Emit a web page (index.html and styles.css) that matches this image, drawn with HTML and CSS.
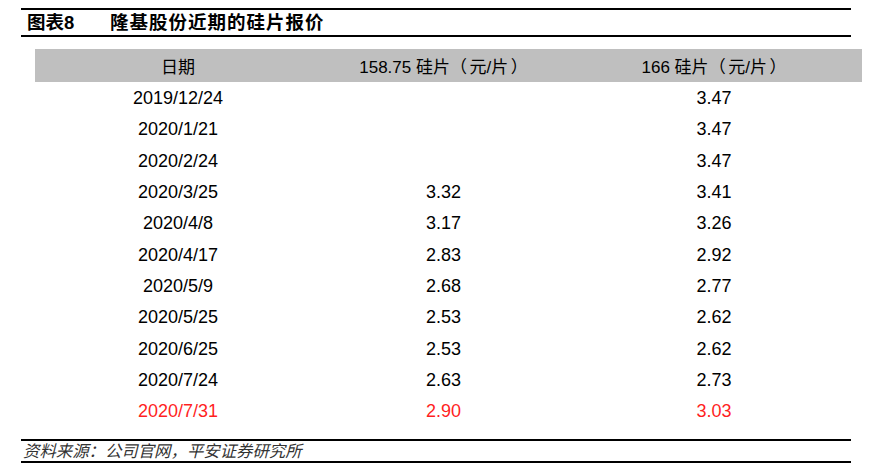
FILE: index.html
```html
<!DOCTYPE html>
<html lang="zh-CN">
<head>
<meta charset="utf-8">
<title>隆基股份近期的硅片报价</title>
<link rel="stylesheet" href="styles.css">
</head>
<body>
<div class="page">
  <div class="title">
    <span class="title-no">图表8</span>
    <span class="title-text">隆基股份近期的硅片报价</span>
  </div>
  <div class="table">
    <div class="row head">
      <div class="cell">日期</div>
      <div class="cell">158.75 硅片<span class="po">（</span>元/片<span class="pc">）</span></div>
      <div class="cell">166 硅片<span class="po">（</span>元/片<span class="pc">）</span></div>
    </div>
    <div class="row"><div class="cell">2019/12/24</div><div class="cell"></div><div class="cell">3.47</div></div>
    <div class="row"><div class="cell">2020/1/21</div><div class="cell"></div><div class="cell">3.47</div></div>
    <div class="row"><div class="cell">2020/2/24</div><div class="cell"></div><div class="cell">3.47</div></div>
    <div class="row"><div class="cell">2020/3/25</div><div class="cell">3.32</div><div class="cell">3.41</div></div>
    <div class="row"><div class="cell">2020/4/8</div><div class="cell">3.17</div><div class="cell">3.26</div></div>
    <div class="row"><div class="cell">2020/4/17</div><div class="cell">2.83</div><div class="cell">2.92</div></div>
    <div class="row"><div class="cell">2020/5/9</div><div class="cell">2.68</div><div class="cell">2.77</div></div>
    <div class="row"><div class="cell">2020/5/25</div><div class="cell">2.53</div><div class="cell">2.62</div></div>
    <div class="row"><div class="cell">2020/6/25</div><div class="cell">2.53</div><div class="cell">2.62</div></div>
    <div class="row"><div class="cell">2020/7/24</div><div class="cell">2.63</div><div class="cell">2.73</div></div>
    <div class="row red"><div class="cell">2020/7/31</div><div class="cell">2.90</div><div class="cell">3.03</div></div>
  </div>
  <div class="source">资料来源：公司官网，平安证券研究所</div>
</div>
</body>
</html>
```
FILE: styles.css
```css
html, body {
  margin: 0;
  padding: 0;
  background: #ffffff;
}
body {
  font-family: "Liberation Sans", "Noto Sans CJK SC", sans-serif;
  color: #000000;
}
.page {
  padding: 8px 0 0 21px;
  width: 830px;
}
.title {
  border-top: 2px solid #000;
  border-bottom: 2px solid #000;
  height: 25px;
  display: flex;
  align-items: center;
  font-weight: bold;
  font-size: 18.5px;
  line-height: 25px;
}
.title-no {
  margin-left: 6px;
  width: 83px;
}
.title-text {
  letter-spacing: 1px;
}
.table {
  margin: 12px 0 0 14px;
  width: 827px;
}
.row {
  display: grid;
  grid-template-columns: 286px 245px 296px;
  height: 31.3px;
  align-items: center;
  font-size: 18px;
}
.row.head {
  height: 33px;
  background: #bfbfbf;
  font-size: 17px;
}
.cell {
  text-align: center;
  white-space: nowrap;
  padding-top: 2px;
}
.row.head .cell {
  padding-top: 0;
}
.po {
  margin-right: 0.15em;
}
.pc {
  margin-left: 0.15em;
}
.row.red {
  color: #ff1f1f;
}
.source {
  margin-top: 13px;
  border-top: 2px solid #000;
  border-bottom: 2px solid #000;
  height: 20px;
  line-height: 20px;
  font-size: 16.4px;
  font-style: italic;
  color: #333333;
  padding-left: 2px;
}
```
